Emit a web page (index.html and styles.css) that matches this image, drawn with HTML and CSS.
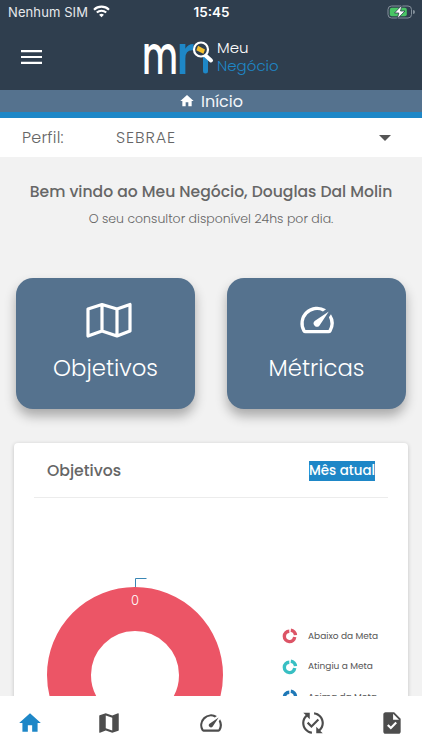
FILE: index.html
```html
<!DOCTYPE html>
<html lang="pt-BR">
<head>
    <meta charset="UTF-8" />
    <meta name="viewport" content="width=device-width, initial-scale=1" />
    <title>Meu Negócio</title>
    <link rel="stylesheet" href="styles.css">
</head>
<body>
    <div class="app">
        <div class="status-bar">
            <div class="carrier">
                <span>Nenhum SIM</span>
                <svg width="17" height="13" viewBox="0 0 17 13" fill="none" stroke="#fff" stroke-width="2.1">
                    <path d="M1 4.7a10.8 10.8 0 0 1 15 0M3.8 7.6a6.8 6.8 0 0 1 9.4 0" />
                    <path d="M8.5 12.3l-2.4-2.5a3.5 3.5 0 0 1 4.8 0z" fill="#fff" stroke="none" />
                </svg>
            </div>
            <div class="clock">15:45</div>
            <svg class="battery" width="28" height="16" viewBox="0 0 28 16">
                <rect x="1" y="2" width="23.5" height="12" rx="3.5" fill="none" stroke="#84909b" />
                <rect x="2.8" y="3.8" width="17" height="8.4" rx="2" fill="#48c564" />
                <path d="M26 6v4a2 2 0 0 0 0-4z" fill="#84909b" />
                <path d="M15 1L7.5 9h4.3l-1.6 6L18 7h-4.5z" fill="#fff" stroke="#2f3e4e" stroke-width=".8" />
            </svg>
        </div>

        <div class="header">
            <svg class="menu-icon" width="21" height="14" viewBox="0 0 21 14" fill="#fff">
                <path d="M0 0h21v2.2H0zM0 5.9h21v2.2H0zM0 11.8h21V14H0z" />
            </svg>
            <div class="logo">
                <svg width="70" height="67" viewBox="0 -16 70 67">
                    <text class="logo-letters" x="-1" y="34.5" textLength="36" lengthAdjust="spacingAndGlyphs" fill="#fff">m</text>
                    <text class="logo-letters" x="33" y="34.5" textLength="19" lengthAdjust="spacingAndGlyphs" fill="#1e87c7">r</text>
                    <path d="M62.5 17v15" stroke="#1e87c7" stroke-width="5" stroke-linecap="round" />
                    <path d="M62 16l6 5.5" stroke="#fff" stroke-width="4" stroke-linecap="round" />
                    <circle cx="58" cy="10.5" r="7" fill="#2f3e4e" stroke="#fff" stroke-width="2.2" />
                    <path d="M55 6.8l7 3.6-1.6 4.3-7-3.5z" fill="#f6c12f" />
                </svg>
                <div class="logo-name">
                    <span class="logo-meu">Meu</span>
                    <span class="logo-negocio">Negócio</span>
                </div>
            </div>
        </div>

        <div class="page-title">
            <svg width="16" height="16" viewBox="0 0 24 24" fill="#fff"><path d="M10 20v-6h4v6h5v-8h3L12 3 2 12h3v8z" /></svg>
            <span>Início</span>
        </div>

        <div class="profile">
            <span class="profile-label">Perfil:</span>
            <span class="profile-value">SEBRAE</span>
            <svg width="12" height="6" viewBox="0 0 12 6" fill="#555"><path d="M0 0h12L6 6z" /></svg>
        </div>

        <div class="content">
            <h1>Bem vindo ao Meu Negócio, Douglas Dal Molin</h1>
            <p class="subtitle">O seu consultor disponível 24hs por dia.</p>

            <div class="tiles">
                <div class="tile">
                    <svg width="48" height="40" viewBox="0 0 48 40" fill="none" stroke="#fff" stroke-width="3.2" stroke-linejoin="round">
                        <path d="M6 9L20 4.5 35 9 48 4.5v26.500L35 36l-15-5-14 5zM20 4.5V31M35 9v27" />
                    </svg>
                    <span>Objetivos</span>
                </div>
                <div class="tile">
                    <svg width="40" height="40" viewBox="0 0 24 24" fill="#fff"><path d="M20.38 8.57l-1.23 1.85a8 8 0 0 1-.22 7.58H5.07A8 8 0 0 1 15.58 6.85l1.85-1.23A10 10 0 0 0 3.35 19a2 2 0 0 0 1.72 1h13.85a2 2 0 0 0 1.74-1 10 10 0 0 0-.27-10.44zm-9.79 6.84a2 2 0 0 0 2.83 0l5.66-8.49-8.49 5.66a2 2 0 0 0 0 2.83z" /></svg>
                    <span>Métricas</span>
                </div>
            </div>

            <div class="card">
                <div class="card-header">
                    <h2>Objetivos</h2>
                    <span class="period">Mês atual</span>
                </div>
                <div class="chart">
                    <svg width="178" height="190" viewBox="0 0 178 190">
                        <circle cx="89" cy="98" r="66" fill="none" stroke="#ec5566" stroke-width="44" />
                        <path d="M89.5 10V1.5h11" fill="none" stroke="#3a87b5" />
                        <text class="chart-value" x="89" y="28" text-anchor="middle">0</text>
                    </svg>
                    <div class="legend">
                        <div class="legend-item red">
                            <svg width="16" height="16" viewBox="0 0 16 16"><path d="M7.3 3.2a5.2 5.2 0 1 0 5.400 5.800" /><path d="M8.800 2.200a5.300 5.300 0 0 1 4.700 5" /></svg>
                            <span>Abaixo da Meta</span>
                        </div>
                        <div class="legend-item teal">
                            <svg width="16" height="16" viewBox="0 0 16 16"><path d="M7.3 3.2a5.2 5.2 0 1 0 5.400 5.800" /><path d="M8.800 2.200a5.300 5.300 0 0 1 4.700 5" /></svg>
                            <span>Atingiu a Meta</span>
                        </div>
                        <div class="legend-item blue">
                            <svg width="16" height="16" viewBox="0 0 16 16"><path d="M7.3 3.2a5.2 5.2 0 1 0 5.400 5.800" /><path d="M8.800 2.200a5.300 5.300 0 0 1 4.700 5" /></svg>
                            <span>Acima da Meta</span>
                        </div>
                    </div>
                </div>
            </div>
        </div>

        <div class="tab-bar">
            <svg class="active" viewBox="0 0 24 24"><path d="M10 20v-6h4v6h5v-8h3L12 3 2 12h3v8z" /></svg>
            <svg viewBox="0 0 24 24"><path d="M20.5 3l-.16.03L15 5.1 9 3 3.36 4.9c-.21.07-.36.25-.36.48V20.5c0 .28.22.5.5.5l.16-.03L9 18.9l6 2.1 5.64-1.9c.21-.07.36-.25.36-.48V3.5c0-.28-.22-.5-.5-.5zM15 19l-6-2.11V5l6 2.11V19z" /></svg>
            <svg viewBox="0 0 24 24"><path d="M20.38 8.57l-1.23 1.85a8 8 0 0 1-.22 7.58H5.07A8 8 0 0 1 15.58 6.85l1.85-1.23A10 10 0 0 0 3.35 19a2 2 0 0 0 1.72 1h13.85a2 2 0 0 0 1.74-1 10 10 0 0 0-.27-10.44zm-9.79 6.84a2 2 0 0 0 2.83 0l5.66-8.49-8.49 5.66a2 2 0 0 0 0 2.83z" /></svg>
            <svg viewBox="0 0 24 24"><path d="M17.66 9.53l-7.07 7.07-4.24-4.24 1.41-1.41 2.83 2.83 5.66-5.66 1.41 1.41zM4 12c0-2.33 1.02-4.42 2.62-5.88L9 8.5v-6H3l2.2 2.2C3.24 6.52 2 9.11 2 12c0 5.19 3.95 9.45 9 9.95v-2.02c-3.94-.49-7-3.86-7-7.93zm18 0c0-5.19-3.95-9.45-9-9.95v2.02c3.94.49 7 3.86 7 7.93 0 2.33-1.02 4.42-2.62 5.88L15 15.5v6h6l-2.2-2.2c1.96-1.82 3.2-4.41 3.2-7.3z" /></svg>
            <svg viewBox="0 0 24 24"><path d="M14 2H6c-1.1 0-1.99.9-1.99 2L4 20c0 1.1.89 2 1.99 2H18c1.1 0 2-.9 2-2V8l-6-6zm-3.06 16L7.4 14.46l1.41-1.41 2.12 2.12 4.24-4.24 1.41 1.41L10.94 18zM13 9V3.5L18.5 9H13z" /></svg>
        </div>
    </div>
</body>
</html>
```
FILE: styles.css
```css
* {
    margin: 0;
    padding: 0;
    box-sizing: border-box;
}
body {
    font-family: Poppins, Inter, sans-serif;
    color: #666;
    background: #f2f2f2;
}
svg {
    display: block;
    flex-shrink: 0;
}
.app {
    height: 750px;
    display: flex;
    flex-direction: column;
    overflow: hidden;
}

/* top */
.status-bar {
    height: 23px;
    flex-shrink: 0;
    padding: 0 7px 0 8px;
    display: grid;
    grid-template-columns: 1fr auto 1fr;
    align-items: center;
    background: #2f3e4e;
    color: #fff;
    font-family: Inter, sans-serif;
    font-size: 13px;
}
.carrier {
    display: flex;
    align-items: center;
    gap: 5px;
    color: #e6e9ec;
    letter-spacing: 0.1px;
}
.clock {
    font-weight: 600;
    font-size: 13.5px;
}
.battery {
    justify-self: end;
}
.header {
    height: 67px;
    flex-shrink: 0;
    display: flex;
    align-items: center;
    padding-left: 21px;
    background: #2f3e4e;
}
.logo {
    display: flex;
    align-items: center;
    margin-left: 101px;
}
.logo svg,
.tile svg {
    overflow: visible;
}
.logo-letters {
    font-size: 54px;
    font-weight: 500;
}
.logo-name {
    display: flex;
    flex-direction: column;
    margin-left: 4px;
    font-size: 15px;
    font-weight: 300;
    line-height: 18px;
}
.logo-meu {
    color: #fff;
}
.logo-negocio {
    color: #1e87c7;
}
.page-title {
    height: 28px;
    flex-shrink: 0;
    display: flex;
    align-items: center;
    justify-content: center;
    gap: 6px;
    background: #55728e;
    border-bottom: 6px solid #1e87c7;
    color: #f3f6f9;
    font-size: 16px;
}
.profile {
    height: 39px;
    flex-shrink: 0;
    display: flex;
    align-items: center;
    padding: 0 31px 0 22px;
    background: #fff;
    font-size: 16px;
    font-weight: 300;
}
.profile-label {
    width: 94px;
    letter-spacing: 0.2px;
}
.profile-value {
    flex: 1;
    letter-spacing: 0.9px;
}

/* content */
.content {
    flex: 1;
    min-height: 0;
    overflow: hidden;
    padding: 23px 14px 0;
}
h1 {
    font-size: 15.6px;
    font-weight: 500;
    line-height: 24px;
    text-align: center;
    white-space: nowrap;
}
.subtitle {
    margin-top: 5px;
    font-size: 12.5px;
    font-weight: 300;
    line-height: 20px;
    text-align: center;
}
.tiles {
    display: grid;
    grid-template-columns: 1fr 1fr;
    gap: 32px;
    padding: 0 2px;
    margin-top: 49px;
}
.tile {
    height: 131px;
    padding-top: 22px;
    display: flex;
    flex-direction: column;
    align-items: center;
    gap: 10px;
    background: #55728e;
    border-radius: 17px;
    box-shadow: 0 7px 12px rgba(0, 0, 0, 0.3);
    color: #fff;
    font-size: 22.8px;
    font-weight: 300;
    line-height: 36px;
}
.card {
    height: 400px;
    margin-top: 34px;
    background: #fff;
    border-radius: 4px;
    box-shadow: 0 1px 4px rgba(0, 0, 0, 0.2);
}
.card-header {
    height: 55px;
    margin: 0 20px;
    padding: 1px 13px 0 13px;
    display: flex;
    align-items: center;
    justify-content: space-between;
    border-bottom: 1px solid #ececec;
}
h2 {
    font-size: 15.7px;
    font-weight: 500;
}
.period {
    background: #1e87c7;
    color: #fff;
    font-size: 13.4px;
    font-weight: 500;
    line-height: 20px;
    white-space: nowrap;
}
.chart {
    display: flex;
    padding: 79px 0 0 32px;
}
.chart-value {
    font-family: Inter, sans-serif;
    font-size: 13px;
    font-weight: 300;
    fill: #fff;
}
.legend {
    margin: 51px 0 0 58px;
}
.legend-item {
    display: flex;
    align-items: center;
    gap: 10px;
    height: 16px;
    margin-bottom: 14.5px;
    font-size: 9px;
    color: #555;
    white-space: nowrap;
}
.legend-item svg {
    fill: none;
    stroke: currentColor;
    stroke-width: 3.4;
}
.red svg {
    color: #dc5466;
}
.teal svg {
    color: #38bfc3;
}
.blue svg {
    color: #1e78b7;
}

/* bottom navigation */
.tab-bar {
    height: 54px;
    flex-shrink: 0;
    display: grid;
    grid-template-columns: 60px 98px 105px 99px 60px;
    align-items: center;
    justify-items: center;
    background: #fff;
}
.tab-bar svg {
    width: 26px;
    height: 26px;
    fill: #4d4d4d;
}
.tab-bar .active {
    fill: #1e87c7;
}
```
